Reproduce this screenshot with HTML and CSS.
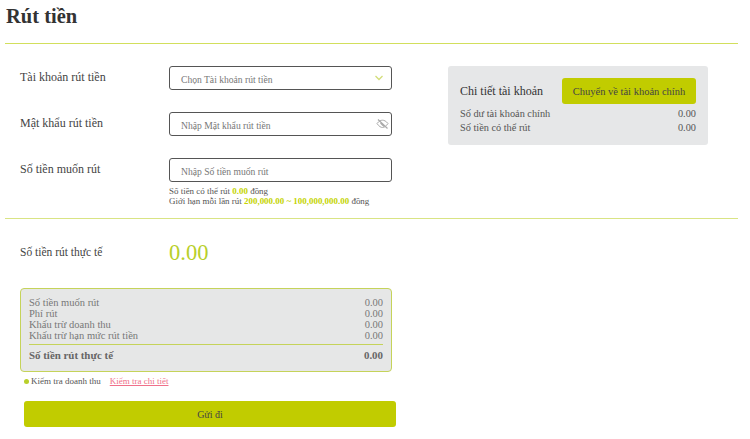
FILE: index.html
```html
<!DOCTYPE html>
<html lang="vi">
<head>
<meta charset="utf-8">
<title>Rút tiền</title>
<link rel="stylesheet" href="styles.css">
</head>
<body>
<div class="page">
  <h1 class="title">Rút tiền</h1>
  <div class="top">
    <div class="form">
      <div class="row">
        <div class="label">Tài khoản rút tiền</div>
        <div class="field">
          <span class="ph">Chọn Tài khoản rút tiền</span>
          <svg class="chev" width="10" height="6" viewBox="0 0 10 6"><path d="M1.500 1l3.500 3.500L8.500 1" fill="none" stroke="#d3dd7a" stroke-width="1.300"/></svg>
        </div>
      </div>
      <div class="row">
        <div class="label">Mật khẩu rút tiền</div>
        <div class="field">
          <span class="ph">Nhập Mật khẩu rút tiền</span>
          <svg class="eye" width="13" height="10" viewBox="0 0 13 10"><path d="M1 4.500C3 2 5 1.200 6.500 1.200S10 2 12 4.500C10 7.500 8 8.500 6.500 8.500S3 7.500 1 4.500Z" fill="none" stroke="#aaa" stroke-width="1"/><path d="M2 .5l9.500 9M4.500 4l3.500 3.500" stroke="#aaa" stroke-width="1.200"/></svg>
        </div>
      </div>
      <div class="row row-last">
        <div class="label">Số tiền muốn rút</div>
        <div class="col">
          <div class="field"><span class="ph">Nhập Số tiền muốn rút</span></div>
          <div class="hint">
            <div>Số tiền có thể rút <b class="hl">0.00</b> đồng</div>
            <div>Giới hạn mỗi lần rút <b class="hl">200,000.00 ~ 100,000,000.00</b> đồng</div>
          </div>
        </div>
      </div>
    </div>
    <div class="panel">
      <div class="panel-head">
        <span class="panel-title">Chi tiết tài khoản</span>
        <button class="btn-main">Chuyển về tài khoản chính</button>
      </div>
      <div class="panel-row"><span>Số dư tài khoản chính</span><span>0.00</span></div>
      <div class="panel-row"><span>Số tiền có thể rút</span><span>0.00</span></div>
    </div>
  </div>
  <div class="actual">
    <div class="label label-up">Số tiền rút thực tế</div>
    <div class="amount">0.00</div>
  </div>
  <div class="summary">
    <div class="sum-row"><span>Số tiền muốn rút</span><span>0.00</span></div>
    <div class="sum-row"><span>Phí rút</span><span>0.00</span></div>
    <div class="sum-row"><span>Khấu trừ doanh thu</span><span>0.00</span></div>
    <div class="sum-row"><span>Khấu trừ hạn mức rút tiền</span><span>0.00</span></div>
    <div class="sum-total"><span>Số tiền rút thực tế</span><span>0.00</span></div>
  </div>
  <div class="check">
    <i class="dot"></i><span>Kiểm tra doanh thu</span><a class="link" href="#">Kiểm tra chi tiết</a>
  </div>
  <button class="submit">Gửi đi</button>
</div>
</body>
</html>
```
FILE: styles.css
```css
* { box-sizing: border-box; }
html, body { margin: 0; padding: 0; background: #fff; }
body { font-family: "Liberation Serif", "Times New Roman", serif; color: #444; overflow: hidden; }
.page { width: 750px; height: 439px; padding: 3px 12px 0 5px; }
.title { margin: 0 0 0 1px; height: 40px; font-size: 20.500px; line-height: 26px; font-weight: 700; color: #333; }
.top { display: flex; justify-content: space-between; height: 176px; padding: 22px 30px 0 15px; border-top: 1px solid #d2df5c; border-bottom: 1px solid #d9e484; }
.form { width: 372px; }
.row { display: flex; height: 46px; }
.row-last { height: auto; }
.label { width: 149px; font-size: 12px; line-height: 22px; color: #444; }
.label-up { margin-top: -3px; font-size: 11.500px; }
.col { width: 223px; }
.field { position: relative; width: 223px; height: 24px; border: 1px solid #555; border-radius: 3px; padding-left: 11px; line-height: 22px; background: #fff; }
.ph { font-size: 9.600px; color: #777; }
.chev { position: absolute; right: 7px; top: 8px; }
.eye { position: absolute; right: 2px; top: 6px; }
.hint { margin-top: 5px; font-size: 8.950px; line-height: 9.500px; color: #555; white-space: nowrap; }
.hl { color: #c4d400; }
.panel { width: 260px; height: 79px; padding: 12px 12px 0 12px; background: #e6e7e8; border-radius: 3px; }
.panel-head { display: flex; justify-content: space-between; align-items: center; height: 26px; margin-bottom: 3px; }
.panel-title { font-size: 12px; color: #333; }
.btn-main { width: 134px; height: 26px; padding: 0; border: 0; border-radius: 3px; background: #c1cc00; font-family: inherit; font-size: 10.500px; color: #444; }
.panel-row { display: flex; justify-content: space-between; font-size: 10.300px; line-height: 14px; height: 14px; color: #555; }
.actual { display: flex; align-items: center; height: 69px; padding: 0 0 0 15px; }
.amount { font-size: 22.500px; color: #b8cf2a; line-height: 26px; margin-top: -1px; }
.summary { width: 372px; height: 84px; margin-left: 15px; padding: 8px 8px 0; background: #e6e7e7; border: 1px solid #c5d35a; border-radius: 4px; font-size: 10.500px; color: #777; }
.sum-row { display: flex; justify-content: space-between; line-height: 11px; height: 11px; }
.sum-total { display: flex; justify-content: space-between; margin-top: 3px; padding-top: 2px; border-top: 1px solid #c5d35a; font-size: 10.900px; line-height: 16px; font-weight: 700; color: #666; }
.check { display: flex; align-items: center; height: 18px; margin: 0 0 0 19px; font-size: 9px; color: #555; }
.dot { width: 5px; height: 5px; margin-right: 2px; border-radius: 50%; background: #b8cf2a; }
.link { margin-left: 8px; padding: 0 1px; color: #f0708a; text-decoration: underline; }
.submit { display: block; width: 372px; height: 26px; margin: 11px 0 0 19px; padding: 0; border: 0; border-radius: 3px; background: #c1cc00; font-family: inherit; font-size: 10px; color: #444; }
```
